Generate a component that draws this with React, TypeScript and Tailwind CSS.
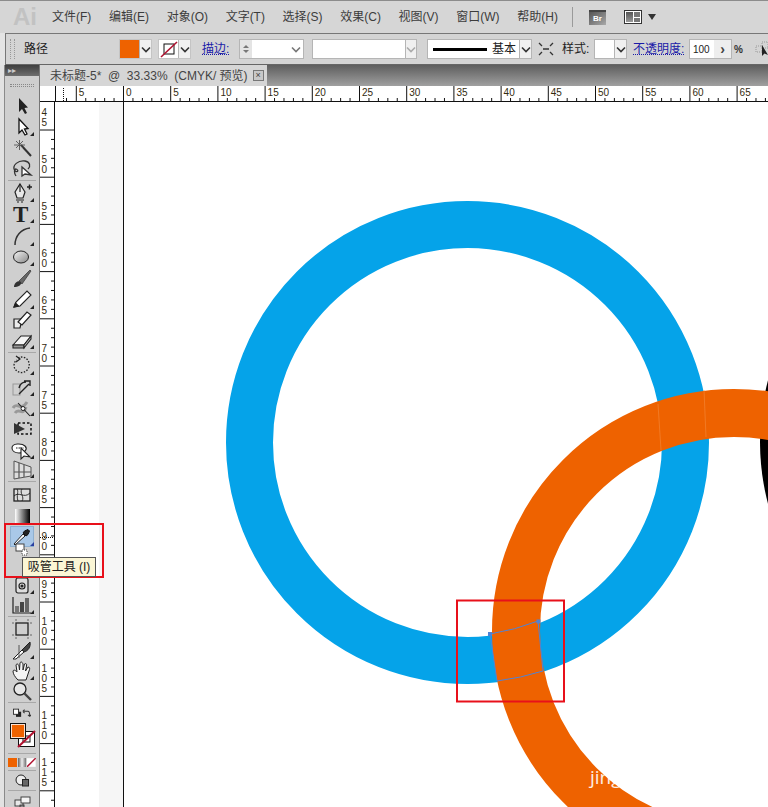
import React from 'react';

const cjk = { fontFamily: '"Liberation Sans", "Noto Sans CJK SC", sans-serif' };

const Chevron = ({ color = '#333' }: { color?: string }) => (
  <svg width="10" height="7" viewBox="0 0 10 7">
    <path d="M1 1.5 L5 5.5 L9 1.5" fill="none" stroke={color} strokeWidth="1.6" />
  </svg>
);

const DropBtn = ({ w = 12, color }: { w?: number; color?: string }) => (
  <div className="h-full flex items-center justify-center bg-[#f0f0f0] border-l border-[#b5b5b5]" style={{ width: w }}>
    <Chevron color={color} />
  </div>
);

// toolbar icons, all on a 24 box
const icons: Record<string, React.ReactNode> = {
  select: <path d="M9 4 L9 18 L12 15 L15 20 L17 19 L14.500 14 L18 13.500 Z" fill="#222" />,
  direct: <path d="M9 4 L9 18 L12 15 L15 20 L17 19 L14.500 14 L18 13.500 Z" fill="#fff" stroke="#111" strokeWidth="1.300" />,
  wand: (
    <g stroke="#333" fill="none">
      <path d="M11 10 L21 21" strokeWidth="2" />
      <path d="M4 10 H15 M9.500 5 V15 M6 6 L13 13 M13 6 L6 13" strokeWidth="0.900" stroke="#555" />
    </g>
  ),
  lasso: (
    <g fill="none" stroke="#333" strokeWidth="1.300">
      <path d="M5 15 C1 9 9 4 15 5 C20 6 21 10 18 13" />
      <path d="M5 15 C8 17 9 14 6 13 C4 13 4 17 6 20" />
      <path d="M12 11 L12 20 L15 18 L21 19 Z" fill="#fff" />
    </g>
  ),
  pen: (
    <g fill="none" stroke="#222" strokeWidth="1.200">
      <path d="M10 3 L15 11 L13 17 H7 L5 11 Z" fill="#e8e8e8" />
      <path d="M10 3 V11 M6 19 H14 M7 21 H9 M11 21 H13" />
      <path d="M17 6 H22 M19.500 3.500 V8.500" strokeWidth="1.500" />
    </g>
  ),
  type: <text x="3" y="20" fontSize="23" fontWeight="700" fontFamily='"Liberation Serif", serif' fill="#222">T</text>,
  arc: <path d="M5 21 C5 12 11 5 20 4" fill="none" stroke="#333" strokeWidth="1.500" />,
  ellipse: (
    <g>
      <defs>
        <linearGradient id="ell" x1="0" y1="0" x2="1" y2="1">
          <stop offset="0" stopColor="#f5f5f5" />
          <stop offset="1" stopColor="#888" />
        </linearGradient>
      </defs>
      <ellipse cx="11" cy="12" rx="7.500" ry="6" fill="url(#ell)" stroke="#222" />
    </g>
  ),
  brush: (
    <g>
      <path d="M9 15 L20 4 L21 5 L12 18 Z" fill="#666" stroke="#333" strokeWidth="0.700" />
      <path d="M4 21 C4 17 8 14 11 16 C12 19 8 21 4 21 Z" fill="#333" />
    </g>
  ),
  pencil: (
    <g stroke="#222" strokeWidth="1.100" fill="#fff">
      <path d="M4 20 L6 15 L17 4 L21 8 L10 19 Z" />
      <path d="M4 20 L5.500 16 L8.500 19 Z" fill="#222" />
    </g>
  ),
  blob: (
    <g stroke="#222" strokeWidth="1.200" fill="#ececec">
      <path d="M4 11 H12 L10 20 H4 Z" />
      <path d="M8 14 L17 4 L21 7 L12 17 Z" fill="#fff" />
    </g>
  ),
  eraser: (
    <g stroke="#222" strokeWidth="1.100">
      <path d="M3 17 L11 8 H21 L14 17 Z" fill="#f4f4f4" />
      <path d="M3 17 L3 20 H14 L14 17 Z" fill="#999" />
      <path d="M14 20 L21 11 V8 L14 17 Z" fill="#bbb" />
    </g>
  ),
  rotate: (
    <g fill="none" stroke="#222">
      <path d="M8 5 C16 1 22 10 18 16 C14 22 5 20 4 13 C4 10 5 8 7 7" strokeWidth="1.300" strokeDasharray="1.500 1.500" />
      <path d="M6 3 L10 6 L6 9" strokeWidth="1.200" />
    </g>
  ),
  scale: (
    <g fill="none">
      <rect x="3" y="9" width="7" height="11" stroke="#999" />
      <path d="M9 19 L19 9 M14 6 H20 V11 M9 13 C10 9 13 7 16 7" stroke="#222" strokeWidth="1.400" />
    </g>
  ),
  warp: (
    <g fill="none">
      <path d="M3 13 C7 6 11 17 17 7" stroke="#999" strokeWidth="3" />
      <path d="M5 18 C9 12 13 22 16 12" stroke="#999" strokeWidth="3" />
      <path d="M8 8 L20 21" stroke="#222" strokeWidth="1.100" />
      <circle cx="13" cy="13.500" r="2" fill="#fff" stroke="#222" />
    </g>
  ),
  free: (
    <g>
      <rect x="8" y="7" width="13" height="11" fill="none" stroke="#111" strokeWidth="1.500" strokeDasharray="2.500 2" />
      <path d="M4 7 L15 13 L4 18 Z" fill="#333" />
    </g>
  ),
  shape: (
    <g fill="#fff" stroke="#222" strokeWidth="1.100">
      <path d="M2 11 C2 6 12 6 15 9 C18 12 15 16 9 16 C5 16 2 14 2 11 Z" />
      <path d="M6 11 H14" strokeDasharray="1.500 1" />
      <path d="M11 11 L11 22 L14 19 L20 20 Z" />
    </g>
  ),
  persp: (
    <g fill="none" stroke="#555">
      <path d="M4 3 V21 L21 18 V9 Z" fill="#ddd" />
      <path d="M9 5 V20 M14 7 V19 M4 14 H21" strokeWidth="1.200" />
    </g>
  ),
  mesh: (
    <g fill="none" stroke="#222">
      <rect x="4" y="6" width="16" height="12" fill="#ddd" strokeWidth="1.300" />
      <path d="M4 13 C9 8 14 16 20 10 M12 6 C9 10 15 14 12 18 M7 6 C9 9 6 12 8 18" strokeWidth="0.900" />
    </g>
  ),
  gradient: (
    <g>
      <defs>
        <linearGradient id="grd" x1="0" y1="0" x2="1" y2="0">
          <stop offset="0" stopColor="#fff" />
          <stop offset="1" stopColor="#000" />
        </linearGradient>
      </defs>
      <rect x="5" y="5" width="15" height="15" fill="url(#grd)" />
    </g>
  ),
  dropper: (
    <g stroke="#111">
      <path d="M5 20 L4 19 L13 9 L15 11 Z" fill="#fff" strokeWidth="0.900" />
      <path d="M13 8 L16 11 L18 9.500 L19.500 6 L18 4.500 L14.500 6 Z" fill="#222" />
    </g>
  ),
  blend: (
    <g fill="#fff" stroke="#444">
      <rect x="6" y="1" width="8" height="7" />
      <rect x="12" y="7" width="5" height="5" strokeDasharray="1 1" />
    </g>
  ),
  symbol: (
    <g fill="#ddd" stroke="#222" strokeWidth="1.200">
      <rect x="6" y="5" width="12" height="15" rx="2" />
      <circle cx="12" cy="13" r="3" fill="none" />
      <circle cx="12" cy="13" r="1" fill="#222" />
    </g>
  ),
  graph: (
    <g>
      <path d="M3 4 V20 H21" fill="none" stroke="#222" strokeWidth="1.200" />
      <rect x="5" y="13" width="4" height="6" fill="#777" />
      <rect x="10" y="9" width="4" height="10" fill="#444" />
      <rect x="15" y="5" width="4" height="14" fill="#666" />
    </g>
  ),
  artboard: (
    <g fill="none" stroke="#222">
      <rect x="6" y="6" width="12" height="12" strokeWidth="1.300" />
      <path d="M6 2 V4 M18 2 V4 M6 20 V22 M18 20 V22 M2 6 H4 M2 18 H4 M20 6 H22 M20 18 H22" stroke="#666" />
    </g>
  ),
  slice: (
    <g>
      <path d="M3 21 L12 12 L14 14 L6 21 Z" fill="#fff" stroke="#222" />
      <path d="M12 12 L20 4 C21 9 18 13 14 14 Z" fill="#444" stroke="#222" />
      <path d="M9 7 V20" stroke="#555" />
    </g>
  ),
  hand: (
    <path
      d="M8 21 C5 18 3 15 3 12 C4 10 6 12 7 13 L6 6 C7 4 8 5 9 7 L9.500 11 L10 4 C11 2 12 3 13 5 L13 11 L14.500 5 C16 4 17 5 16.500 7 L15.500 12 L18 8 C20 8 20 10 19 12 C18 15 17 18 16 21 Z"
      fill="#f4f4f4"
      stroke="#222"
    />
  ),
  zoom: (
    <g fill="none" stroke="#222">
      <circle cx="10" cy="10" r="6" fill="#e6e6e6" strokeWidth="1.300" />
      <path d="M14.500 14.500 L21 21" strokeWidth="2.400" stroke="#444" />
    </g>
  ),
  screen: (
    <g fill="#e8e8e8" stroke="#333" strokeWidth="0.900">
      <rect x="5" y="13" width="8" height="6" />
      <rect x="11" y="10" width="9" height="6" fill="#f5f5f5" />
      <rect x="10" y="18" width="4" height="6" fill="#888" />
    </g>
  ),
  draw: (
    <g fill="#eee" stroke="#222">
      <circle cx="11" cy="12" r="5" />
      <rect x="12.500" y="11.500" width="6" height="6.500" fill="#666" />
    </g>
  ),
};

type Row = { h: number; icon?: string; corner?: boolean; sep?: boolean; active?: boolean };

const upper: Row[] = [
  { h: 21, icon: 'select' },
  { h: 21, icon: 'direct', corner: true },
  { h: 20, icon: 'wand' },
  { h: 21, icon: 'lasso' },
  { h: 4, sep: true },
  { h: 21, icon: 'pen', corner: true },
  { h: 21, icon: 'type', corner: true },
  { h: 23, icon: 'arc', corner: true },
  { h: 20, icon: 'ellipse', corner: true },
  { h: 21, icon: 'brush' },
  { h: 22, icon: 'pencil', corner: true },
  { h: 20, icon: 'blob' },
  { h: 20, icon: 'eraser', corner: true },
  { h: 4, sep: true },
  { h: 22, icon: 'rotate', corner: true },
  { h: 21, icon: 'scale', corner: true },
  { h: 20, icon: 'warp', corner: true },
  { h: 21, icon: 'free' },
  { h: 22, icon: 'shape', corner: true },
  { h: 19, icon: 'persp', corner: true },
  { h: 5, sep: true },
  { h: 22, icon: 'mesh' },
  { h: 20, icon: 'gradient' },
  { h: 21, icon: 'dropper', corner: true, active: true },
  { h: 16, icon: 'blend' },
  { h: 12 },
  { h: 20, icon: 'symbol', corner: true },
  { h: 20, icon: 'graph', corner: true },
  { h: 3, sep: true },
  { h: 22, icon: 'artboard' },
  { h: 20, icon: 'slice', corner: true },
  { h: 21, icon: 'hand', corner: true },
  { h: 20, icon: 'zoom' },
  { h: 3, sep: true },
];

const ToolRow = ({ row }: { row: Row }) => {
  if (row.sep) {
    return (
      <div className="flex items-center px-[3px]" style={{ height: row.h }}>
        <div className="w-full h-px bg-[#f4f4f4] border-t border-[#a8a8a8]" />
      </div>
    );
  }
  return (
    <div className="relative flex items-center justify-center" style={{ height: row.h }}>
      {row.active && <div className="absolute left-[5px] top-0 w-[24px] h-[21px] bg-[#a9c8e8] border border-[#8fb0d0]" />}
      {row.icon && (
        <svg width="24" height="24" viewBox="0 0 24 24" className="relative shrink-0">
          {icons[row.icon]}
        </svg>
      )}
      {row.corner && (
        <div className={`absolute right-[5px] bottom-[1px] w-0 h-0 border-l-[4px] border-l-transparent border-b-[4px] ${row.active ? 'border-b-[#2a3fa0]' : 'border-b-[#222]'}`} />
      )}
    </div>
  );
};

const ColorWell = () => (
  <svg width="34" height="29" viewBox="0 0 34 29" className="block">
    <rect x="13.500" y="9.500" width="16" height="15" fill="#fff" stroke="#111" />
    <rect x="18" y="14" width="7" height="6" fill="#fff" stroke="#111" />
    <path d="M13 25 L30 9" stroke="#b01230" strokeWidth="2" />
    <rect x="5.500" y="1.500" width="15" height="15" fill="#ee6200" stroke="#111" />
    <rect x="6.500" y="2.500" width="13" height="13" fill="none" stroke="#fff" strokeWidth="0.800" />
  </svg>
);

const Toolbar = () => (
  <div className="w-[40px] h-full shrink-0 flex bg-[#dcdcdc]">
    <div className="w-[5px] bg-[#e2e2e2] border-r border-[#8a8a8a]" />
    <div className="w-[35px] h-full bg-[#cfcfcf] border-r border-[#777] flex flex-col overflow-hidden">
      <div className="h-[11px] shrink-0 bg-gradient-to-b from-[#3f3f3f] to-[#6e6e6e] flex items-center pl-[3px] text-[8px] leading-none text-[#ccc]" style={cjk}>
        ▸▸
      </div>
      <div className="h-[19px] shrink-0 flex items-center px-[5px]">
        <div className="w-full h-[3px] border-y border-dotted border-[#888]" />
      </div>
      {upper.map((row, i) => <ToolRow key={i} row={row} />)}
      <div className="h-[18px] shrink-0 flex items-center justify-between px-[8px]">
        <svg width="10" height="10" viewBox="0 0 10 10">
          <rect x="3.500" y="3.500" width="6" height="6" fill="#222" />
          <rect x="0.500" y="0.500" width="6" height="6" fill="#fff" stroke="#222" />
        </svg>
        <svg width="11" height="11" viewBox="0 0 11 11">
          <path d="M2 3 H7 C9 3 9 5 9 8 M1 3 L3 1 M1 3 L3 5 M9 9 L7 7 M9 9 L10.500 7" fill="none" stroke="#333" strokeWidth="1.200" />
        </svg>
      </div>
      <div className="h-[29px] shrink-0"><ColorWell /></div>
      <div className="h-[4px] shrink-0 flex items-center px-[3px]"><div className="w-full h-px bg-[#a8a8a8]" /></div>
      <div className="h-[14px] shrink-0 flex items-center gap-px px-[3px]">
        <div className="w-[9px] h-[9px] bg-[#ee6200]" />
        <div className="w-[9px] h-[9px] bg-gradient-to-r from-[#666] via-[#eee] to-[#777]" />
        <svg width="9" height="9" viewBox="0 0 9 9">
          <rect width="9" height="9" fill="#fff" />
          <path d="M0 9 L9 0" stroke="#b01230" strokeWidth="1.500" />
        </svg>
      </div>
      <div className="h-[2px] shrink-0 flex items-center px-[3px]"><div className="w-full h-px bg-[#a8a8a8]" /></div>
      <div className="h-[18px] shrink-0 flex items-center justify-center">
        <svg width="24" height="24" viewBox="0 0 24 24" className="shrink-0">{icons.draw}</svg>
      </div>
      <div className="h-[2px] shrink-0 flex items-center px-[3px]"><div className="w-full h-px bg-[#a8a8a8]" /></div>
      <div className="h-[16px] shrink-0 flex items-center justify-center">
        <svg width="24" height="24" viewBox="0 0 24 24" className="shrink-0">{icons.screen}</svg>
      </div>
    </div>
  </div>
);

const UNIT = 47.2;

const HRuler = () => {
  const marks: { x: number; label: number }[] = [];
  for (let i = -1; i <= 13; i++) marks.push({ x: 123.5 + i * UNIT, label: Math.abs(i * 5) });
  return (
    <svg width="728" height="16" viewBox="40 86 728 16" className="block shrink-0">
      <rect x="40" y="86" width="728" height="16" fill="#fff" />
      <path d="M55.500 86 V102 M40 101.500 H768" stroke="#111" />
      <path d="M63.500 88 V101" stroke="#111" strokeDasharray="1 1" />
      {marks.map(m => (
        <g key={m.x}>
          <path d={`M${m.x} 86 V101`} stroke="#111" />
          {[1, 2, 3, 4].map(k => (
            <path key={k} d={`M${m.x + (k * UNIT) / 5} 98 V101`} stroke="#111" />
          ))}
          <text x={m.x + 2.500} y={96} fontSize="10" fill="#332b10" fontFamily='"Liberation Sans", sans-serif'>{m.label}</text>
        </g>
      ))}
      <path d="M66.500 98 V101" stroke="#111" />
    </svg>
  );
};

const VRuler = () => {
  const marks: { y: number; label: string }[] = [];
  for (let i = 0; i < 15; i++) marks.push({ y: 130 + i * UNIT, label: String(50 + i * 5 - 5) });
  return (
    <svg width="15" height="705" viewBox="40 102 15 705" className="block shrink-0">
      <rect x="40" y="102" width="15" height="705" fill="#fff" />
      <path d="M54.500 102 V807" stroke="#111" />
      <path d="M40 537.500 H55" stroke="#111" strokeDasharray="1 1" />
      {marks.map(m => (
        <g key={m.y}>
          <path d={`M40 ${m.y} H55`} stroke="#111" />
          {[1, 2, 3, 4].map(k => (
            <path key={k} d={`M51 ${m.y + (k * UNIT) / 5} H55`} stroke="#111" />
          ))}
          {m.label.split('').reverse().map((d, k) => (
            <text key={k} x="41.500" y={m.y - 4.500 - k * 10} fontSize="10" fill="#332b10" fontFamily='"Liberation Sans", sans-serif'>{d}</text>
          ))}
        </g>
      ))}
    </svg>
  );
};

const Artwork = () => (
  <svg width="713" height="705" viewBox="55 102 713 705" className="absolute left-0 top-0">
    <circle cx="1002" cy="442" r="242" fill="#000" />
    <circle cx="467.500" cy="442.500" r="218" fill="none" stroke="#05a3e9" strokeWidth="47" />
    <circle cx="734" cy="631" r="218" fill="none" stroke="#ee6200" strokeWidth="48" />
    <path d="M704 390 L706 437 M658 404 L661 450" stroke="#f48a3c" strokeWidth="0.600" />
    <path d="M490 634 Q515 630 538 621 M497 681 Q521 678 543 671 M490 634 L497 681 M538 621 L543 671" fill="none" stroke="#4f83d6" strokeWidth="1" />
    <rect x="488" y="632" width="4" height="4" fill="#4f83d6" />
    <rect x="536.500" y="619.500" width="4" height="4" fill="#4f83d6" />
    <rect x="457" y="600.500" width="107" height="101" fill="none" stroke="#e8101a" strokeWidth="2" />
  </svg>
);

const Canvas = () => (
  <div className="relative flex-1 min-w-0 flex overflow-hidden bg-white">
    <div className="w-[44px] bg-white" />
    <div className="w-[24px] bg-[#f6f6f6]" />
    <div className="w-px bg-[#111]" />
    <div className="flex-1 bg-white" />
    <Artwork />
    <div className="absolute left-[535px] top-[666px] text-[19px] leading-none text-white/90" style={{ fontFamily: '"Open Sans", sans-serif' }}>
      jingyan.baidu.com
    </div>
  </div>
);

const menu = ['文件(F)', '编辑(E)', '对象(O)', '文字(T)', '选择(S)', '效果(C)', '视图(V)', '窗口(W)', '帮助(H)'];

const MenuBar = () => (
  <div className="h-[33px] shrink-0 flex items-center bg-[#d6d6d6] border-t border-[#8c8c8c]">
    <div className="w-[52px] pl-[13px] text-[24px] font-bold leading-none text-[#c2c2c2]" style={{ fontFamily: '"Liberation Sans", sans-serif' }}>Ai</div>
    <div className="w-[506px] flex items-center justify-between text-[12px] text-[#3c3c3c]" style={cjk}>
      {menu.map(m => <span key={m}>{m}</span>)}
    </div>
    <div className="w-px h-[20px] bg-[#9a9a9a] ml-[14px]" />
    <div className="ml-[16px] w-[17px] h-[15px] bg-gradient-to-br from-[#555] to-[#aaa] border-t-2 border-[#444] text-[8px] leading-[13px] font-bold text-white text-center" style={cjk}>Br</div>
    <div className="ml-[18px] w-[18px] h-[14px] border border-[#333] bg-white grid grid-cols-2 gap-px p-px">
      <div className="row-span-2 bg-gradient-to-b from-[#555] to-[#999]" />
      <div className="bg-[#777]" />
      <div className="bg-[#777]" />
    </div>
    <div className="ml-[6px] w-0 h-0 border-x-[4px] border-x-transparent border-t-[6px] border-t-[#333]" />
  </div>
);

const ControlBar = () => (
  <div className="h-[32px] shrink-0 flex bg-[#e0e0e0]">
    <div className="w-[5px] shrink-0 bg-[#e4e4e4]" />
    <div className="flex-1 flex items-center bg-[#d4d4d4] border-t border-l border-[#777] border-b-[#666] border-b" style={cjk}>
      <div className="w-[5px] ml-[4px] h-[20px] border-x border-dotted border-[#999]" />
      <span className="ml-[9px] w-[24px] text-[12px] text-[#222] whitespace-nowrap">路径</span>
      <div className="ml-[71px] h-[20px] flex border border-[#c4c4c4] bg-white">
        <div className="w-[19px] bg-[#ee6200]" />
        <DropBtn w={12} />
      </div>
      <div className="ml-[6px] h-[20px] flex border border-[#c4c4c4] bg-white">
        <svg width="19" height="18" viewBox="0 0 19 18">
          <rect x="5" y="4" width="10" height="10" fill="#fff" stroke="#111" />
          <path d="M2 17 L18 2" stroke="#b01230" strokeWidth="1.600" />
        </svg>
        <DropBtn w={12} />
      </div>
      <span className="ml-[11px] w-[28px] text-[12px] text-[#1a1aa8] underline decoration-dotted whitespace-nowrap">描边:</span>
      <div className="ml-[9px] w-[65px] h-[20px] flex items-center bg-white border border-[#b5b5b5]">
        <div className="w-[12px] h-full bg-[#e4e4e4] flex flex-col items-center justify-center gap-[2px]">
          <div className="w-0 h-0 border-x-[3px] border-x-transparent border-b-[3px] border-b-[#777]" />
          <div className="w-0 h-0 border-x-[3px] border-x-transparent border-t-[3px] border-t-[#777]" />
        </div>
        <div className="ml-auto mr-[2px]"><Chevron color="#777" /></div>
      </div>
      <div className="ml-[8px] w-[105px] h-[20px] flex justify-end bg-white border border-[#b5b5b5]">
        <DropBtn w={11} color="#aaa" />
      </div>
      <div className="ml-[10px] w-[105px] h-[20px] flex items-center bg-white border border-[#b5b5b5]">
        <div className="ml-[5px] w-[54px] h-[3px] bg-black" />
        <span className="ml-[5px] text-[12px] text-[#222] whitespace-nowrap">基本</span>
        <div className="ml-auto h-full"><DropBtn w={12} /></div>
      </div>
      <svg width="16" height="14" viewBox="0 0 16 14" className="ml-[6px]">
        <path d="M1 1 L4 4 M15 1 L12 4 M1 13 L4 10 M15 13 L12 10 M5 7 H11" stroke="#333" strokeWidth="1.300" />
      </svg>
      <span className="ml-[8px] w-[28px] text-[12px] text-[#222] whitespace-nowrap">样式:</span>
      <div className="ml-[4px] w-[33px] h-[20px] flex justify-end bg-white border border-[#b5b5b5]">
        <DropBtn w={12} />
      </div>
      <span className="ml-[6px] w-[52px] text-[12px] text-[#1a1aa8] underline decoration-dotted whitespace-nowrap">不透明度:</span>
      <div className="ml-[4px] w-[43px] h-[20px] flex items-center bg-white border border-[#b5b5b5] text-[10px] text-[#222]">
        <span className="ml-[3px]">100</span>
        <span className="ml-auto h-full w-[17px] bg-[#eee] flex items-center justify-center text-[14px] font-bold leading-none text-[#444]">›</span>
      </div>
      <span className="ml-[2px] text-[10px] font-bold text-[#333]">%</span>
      <svg width="14" height="16" viewBox="0 0 14 16" className="ml-[12px] shrink-0">
        <path d="M1 5 H7 V11 H1 Z M7 1 H13 V7 H7 Z" fill="none" stroke="#999" strokeDasharray="1 1" />
        <path d="M7 4 L7 15 L9.500 12.500 L13 14 Z" fill="#222" />
      </svg>
    </div>
  </div>
);

const TabBar = () => (
  <div className="h-[21px] shrink-0 flex bg-gradient-to-b from-[#5e5e5e] to-[#a0a0a0]">
    <div className="w-[227px] h-full bg-[#d6d6d6] flex items-center pl-[10px] text-[12px] text-[#444] whitespace-pre" style={cjk}>
      未标题-5*  @  33.33%  (CMYK/ 预览)
      <span className="ml-[5px] w-[11px] h-[11px] shrink-0 border border-[#777] bg-[#c8c8c8] text-[9px] leading-[9px] text-center text-[#444]">×</span>
    </div>
  </div>
);

export default function App() {
  return (
    <div className="relative w-[768px] h-[807px] overflow-hidden flex flex-col bg-[#d6d6d6]">
      <MenuBar />
      <ControlBar />
      <div className="flex-1 min-h-0 flex">
        <Toolbar />
        <div className="flex-1 min-w-0 flex flex-col">
          <TabBar />
          <HRuler />
          <div className="flex-1 min-h-0 flex">
            <VRuler />
            <Canvas />
          </div>
        </div>
      </div>

      {/* tooltip and the red mark over the toolbar */}
      <div className="absolute left-[4px] top-[523px] w-[100px] h-[55px] border-2 border-[#e8101a] pointer-events-none" />
      <div className="absolute left-[22px] top-[557px] w-[74px] h-[20px] flex items-center justify-center bg-[#fbf6d5] border border-[#555] text-[12px] text-[#222] whitespace-nowrap" style={cjk}>
        吸管工具 (I)
      </div>
    </div>
  );
}
